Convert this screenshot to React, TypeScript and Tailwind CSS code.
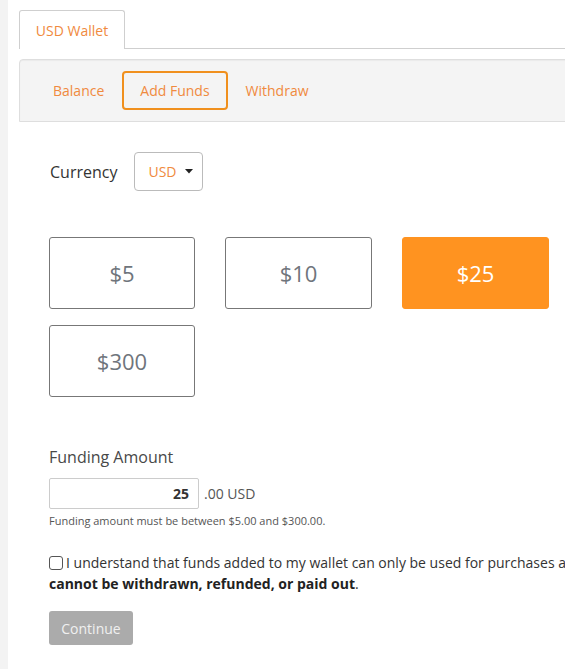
import React from "react";

export default function App() {
  const amounts = ["$5", "$10", "$25", "$300"];
  return (
    <div
      className="w-[565px] h-[669px] overflow-hidden bg-white flex"
      style={{ fontFamily: '"Open Sans", "Liberation Sans", sans-serif' }}
    >
      <div className="w-[8px] shrink-0 bg-[#f3f3f3]" />
      <div className="pl-[11px] pt-[10px] w-[900px] shrink-0">
        {/* Tabs */}
        <div className="flex border-b border-[#cfcfcf] h-[39px]">
          <div className="w-[106px] h-[39px] border border-b-0 border-[#cfcfcf] rounded-t-[3px] bg-white flex items-center justify-center text-[14px] text-[#f08a3e]">
            USD Wallet
          </div>
        </div>
        {/* Panel nav */}
        <div className="mt-[10px] h-[63px] bg-[#f4f4f4] border border-[#dedede] rounded-tl-[4px] shadow-[inset_0_1px_1px_rgba(0,0,0,0.04)] flex items-center pl-[14px]">
          <div className="pl-[17px] pr-[16px] h-[39px] border-2 border-transparent flex items-center text-[14px] text-[#f08a3e]">
            Balance
          </div>
          <div className="px-[16px] h-[39px] border-2 border-[#f0901e] rounded-[4px] flex items-center text-[14px] text-[#f08a3e]">
            Add Funds
          </div>
          <div className="px-[16px] h-[39px] border-2 border-transparent flex items-center text-[14px] text-[#f08a3e]">
            Withdraw
          </div>
        </div>
        {/* Body */}
        <div className="pl-[30px]">
          <div className="mt-[30px] flex items-center">
            <span className="text-[16px] text-[#333] ml-[1px]">Currency</span>
            <div className="ml-[17px] w-[69px] h-[39px] border border-[#bbbbbb] rounded-[4px] flex items-center pl-[13px] text-[14px] text-[#f08a3e]">
              USD
              <svg width="8" height="5" viewBox="0 0 8 5" className="ml-[8px]">
                <path d="M0 0 L8 0 L4 4.5 Z" fill="#222" />
              </svg>
            </div>
          </div>
          <div className="mt-[46px] grid grid-cols-[146px_147px_147px] gap-x-[30px] gap-y-[16px]">
            {amounts.map((a) => {
              const active = a === "$25";
              return (
                <div
                  key={a}
                  className={
                    active
                      ? "h-[72px] rounded-[3px] bg-[#ff9320] border border-[#ff9320] flex items-center justify-center text-[22px] text-white"
                      : "h-[72px] rounded-[3px] bg-white border border-[#777] flex items-center justify-center text-[22px] text-[#6f757c]"
                  }
                >
                  {a}
                </div>
              );
            })}
          </div>
          <div className="mt-[48px] text-[16px] leading-[24px] text-[#484848]">Funding Amount</div>
          <div className="mt-[9px] flex items-center">
            <div className="w-[150px] h-[31px] border border-[#cccccc] rounded-[2px] flex items-center justify-end pr-[9px] text-[14px] font-bold text-[#333]">
              25
            </div>
            <span className="ml-[5px] text-[14px] text-[#555]">.00 USD</span>
          </div>
          <div className="mt-[5px] text-[11px] leading-[14px] text-[#555]">
            Funding amount must be between $5.00 and $300.00.
          </div>
          <div className="mt-[24px] text-[14px] leading-[21px] text-[#333] w-[700px]">
            <span className="inline-block w-[14px] h-[14px] border border-[#555] rounded-[3px] align-[-2px] mr-[3px] bg-white" />
            I understand that funds added to my wallet can only be used for purchases and
            <br />
            <b className="text-[#222]">cannot be withdrawn, refunded, or paid out</b>.
          </div>
          <div className="mt-[17px] w-[84px] h-[34px] rounded-[3px] bg-[#ababab] flex items-center justify-center text-[14px] text-[#f0f0f0]">
            Continue
          </div>
        </div>
      </div>
    </div>
  );
}
